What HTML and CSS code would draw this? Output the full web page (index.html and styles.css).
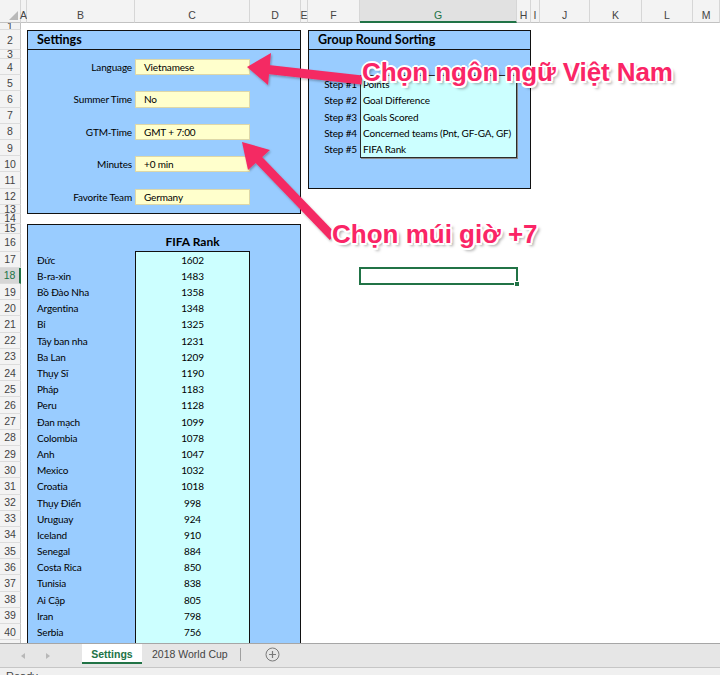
FILE: index.html
```html
<!DOCTYPE html>
<html lang="vi">
<head>
<meta charset="utf-8">
<title>Settings - 2018 World Cup</title>
<link rel="stylesheet" href="styles.css">
</head>
<body>
<div class="app">
  <div class="sheet">
    <div class="ch corner"><span class="tri"></span></div>
    <div class="ch">A</div>
    <div class="ch">B</div>
    <div class="ch">C</div>
    <div class="ch">D</div>
    <div class="ch">E</div>
    <div class="ch">F</div>
    <div class="ch sel">G</div>
    <div class="ch">H</div>
    <div class="ch">I</div>
    <div class="ch">J</div>
    <div class="ch">K</div>
    <div class="ch">L</div>
    <div class="ch">M</div>

    <div class="rh">1</div>
    <div class="rh">2</div>
    <div class="rh">3</div>
    <div class="rh">4</div>
    <div class="rh">5</div>
    <div class="rh">6</div>
    <div class="rh">7</div>
    <div class="rh">8</div>
    <div class="rh">9</div>
    <div class="rh">10</div>
    <div class="rh">11</div>
    <div class="rh">12</div>
    <div class="rh tiny">13</div>
    <div class="rh tiny">14</div>
    <div class="rh tiny">15</div>
    <div class="rh">16</div>
    <div class="rh">17</div>
    <div class="rh sel">18</div>
    <div class="rh">19</div>
    <div class="rh">20</div>
    <div class="rh">21</div>
    <div class="rh">22</div>
    <div class="rh">23</div>
    <div class="rh">24</div>
    <div class="rh">25</div>
    <div class="rh">26</div>
    <div class="rh">27</div>
    <div class="rh">28</div>
    <div class="rh">29</div>
    <div class="rh">30</div>
    <div class="rh">31</div>
    <div class="rh">32</div>
    <div class="rh">33</div>
    <div class="rh">34</div>
    <div class="rh">35</div>
    <div class="rh">36</div>
    <div class="rh">37</div>
    <div class="rh">38</div>
    <div class="rh">39</div>
    <div class="rh">40</div>
    <div class="rh">41</div>

    <section class="box settings">
      <div class="box-head">Settings</div>
      <div class="fields">
        <div class="field"><div class="lbl">Language</div><div class="val">Vietnamese</div></div>
        <div class="field"><div class="lbl">Summer Time</div><div class="val">No</div></div>
        <div class="field"><div class="lbl">GTM-Time</div><div class="val">GMT + 7:00</div></div>
        <div class="field"><div class="lbl">Minutes</div><div class="val">+0 min</div></div>
        <div class="field"><div class="lbl">Favorite Team</div><div class="val">Germany</div></div>
      </div>
    </section>

    <section class="box group">
      <div class="box-head">Group Round Sorting</div>
      <div class="steps">
        <div class="step-lbls">
          <div>Step #1</div>
          <div>Step #2</div>
          <div>Step #3</div>
          <div>Step #4</div>
          <div>Step #5</div>
        </div>
        <div class="step-list">
          <div>Points</div>
          <div>Goal Difference</div>
          <div>Goals Scored</div>
          <div>Concerned teams (Pnt, GF-GA, GF)</div>
          <div>FIFA Rank</div>
        </div>
      </div>
    </section>

    <section class="box fifa">
      <div class="fifa-gap"></div>
      <div class="fifa-head"><div class="t">FIFA Rank</div></div>
      <div class="fifa-body">
        <div class="names">
          <div>Đức</div>
          <div>B-ra-xin</div>
          <div>Bồ Đào Nha</div>
          <div>Argentina</div>
          <div>Bỉ</div>
          <div>Tây ban nha</div>
          <div>Ba Lan</div>
          <div>Thụy Sĩ</div>
          <div>Pháp</div>
          <div>Peru</div>
          <div>Đan mạch</div>
          <div>Colombia</div>
          <div>Anh</div>
          <div>Mexico</div>
          <div>Croatia</div>
          <div>Thụy Điển</div>
          <div>Uruguay</div>
          <div>Iceland</div>
          <div>Senegal</div>
          <div>Costa Rica</div>
          <div>Tunisia</div>
          <div>Ai Cập</div>
          <div>Iran</div>
          <div>Serbia</div>
          <div>&nbsp;</div>
        </div>
        <div class="ranks">
          <div>1602</div>
          <div>1483</div>
          <div>1358</div>
          <div>1348</div>
          <div>1325</div>
          <div>1231</div>
          <div>1209</div>
          <div>1190</div>
          <div>1183</div>
          <div>1128</div>
          <div>1099</div>
          <div>1078</div>
          <div>1047</div>
          <div>1032</div>
          <div>1018</div>
          <div>998</div>
          <div>924</div>
          <div>910</div>
          <div>884</div>
          <div>850</div>
          <div>838</div>
          <div>805</div>
          <div>798</div>
          <div>756</div>
          <div>&nbsp;</div>
        </div>
      </div>
    </section>

    <div class="selcell"><span class="handle"></span></div>
  </div>

  <div class="tabbar">
    <div class="nav"><span class="arr-l"></span><span class="arr-r"></span></div>
    <div class="tab active">Settings</div>
    <div class="tab other">2018 World Cup</div>
    <div class="sep"></div>
    <svg class="add" width="15" height="15" viewBox="0 0 15 15">
      <circle cx="7.5" cy="7.5" r="6.5" fill="none" stroke="#7a7a7a" stroke-width="1"/>
      <path d="M7.5 4v7M4 7.5h7" stroke="#7a7a7a" stroke-width="1.2"/>
    </svg>
  </div>
  <div class="status">Ready</div>

  <svg class="arrows" width="720" height="675" viewBox="0 0 720 675">
    <defs>
      <filter id="sh" x="-20%" y="-20%" width="140%" height="140%">
        <feDropShadow dx="1" dy="1.5" stdDeviation="1" flood-color="#000" flood-opacity="0.3"/>
      </filter>
    </defs>
    <g fill="#f42a64" stroke="none" filter="url(#sh)">
      <line x1="268" y1="69.5" x2="362" y2="80" stroke="#f42a64" stroke-width="9"/>
      <polygon points="247,67 271,53 268,85"/>
      <line x1="256" y1="157" x2="333" y2="237" stroke="#f42a64" stroke-width="9"/>
      <polygon points="242,142 270,150 248,170"/>
    </g>
  </svg>
  <div class="callout c1">Chọn ngôn ngữ Việt Nam</div>
  <div class="callout c2">Chọn múi giờ +7</div>
</div>
</body>
</html>
```

FILE: styles.css
```css
* { box-sizing: border-box; }

html, body {
  margin: 0;
  padding: 0;
}

body {
  width: 720px;
  height: 675px;
  overflow: hidden;
  background: #ffffff;
  font-family: "Liberation Sans", Arial, sans-serif;
}

.app {
  position: relative;
  width: 720px;
  height: 675px;
  overflow: hidden;
}

/* ---------- sheet grid ---------- */
.sheet {
  display: grid;
  grid-template-columns: 21px 6px 108px 115px 51px 7px 52px 157px 14px 9px 50px 52px 51px 1fr;
  grid-template-rows: 23px 7px 20px 9px repeat(9, 16.2px) 9px 10px 10px 18px repeat(25, 16.2px);
  height: 643px;
  overflow: hidden;
  background: #ffffff;
}

.ch {
  grid-row: 1 / 2;
  display: flex;
  justify-content: center;
  background: #f3f3f3;
  border-right: 1px solid #d6d6d6;
  border-bottom: 1px solid #c2c2c2;
  padding-top: 8px;
  font-size: 10.5px;
  line-height: 14px;
  color: #444444;
  white-space: nowrap;
}

.ch.sel {
  background: #e1e1e1;
  color: #217346;
  border-bottom: 2px solid #217346;
}

.corner {
  justify-content: flex-end;
  align-items: flex-end;
  padding: 0 2px 2px 0;
}

.tri {
  width: 0;
  height: 0;
  border-left: 9px solid transparent;
  border-bottom: 9px solid #b9b9b9;
}

.rh {
  grid-column: 1 / 2;
  display: flex;
  align-items: center;
  justify-content: center;
  overflow: hidden;
  background: #f3f3f3;
  border-right: 1px solid #c2c2c2;
  border-bottom: 1px solid #dcdcdc;
  font-size: 10.5px;
  line-height: 12px;
  color: #444444;
}

.rh.tiny {
  align-items: flex-start;
  line-height: 8px;
}

.rh.sel {
  background: #d6d6d6;
  color: #217346;
  border-right: 2px solid #217346;
}

/* ---------- boxes ---------- */
.box {
  background: #99ccff;
  border: 1px solid #111111;
  font-family: "Lato", "Liberation Sans", sans-serif;
  font-size: 10px;
  letter-spacing: -0.15px;
  color: #000000;
}

.box-head {
  height: 19px;
  border-bottom: 1px solid #111111;
  padding-left: 9px;
  font-weight: bold;
  font-size: 12.5px;
  letter-spacing: 0;
  line-height: 18px;
}

.settings {
  grid-column: 3 / 6;
  grid-row: 3 / 15;
}

.fields {
  display: flex;
  flex-direction: column;
  gap: 16.2px;
  padding-top: 9px;
}

.field {
  display: flex;
  height: 16.2px;
}

.field .lbl {
  width: 107px;
  padding-right: 3px;
  text-align: right;
  line-height: 16.2px;
  white-space: nowrap;
}

.field .val {
  width: 115px;
  background: #ffffcc;
  border: 1px solid #ddd7a8;
  padding-left: 8px;
  line-height: 14px;
  white-space: nowrap;
}

.group {
  grid-column: 7 / 10;
  grid-row: 3 / 13;
}

.steps {
  display: flex;
  padding-top: 25.2px;
}

.step-lbls {
  width: 51px;
  padding-top: 1px;
}

.step-lbls div {
  height: 16.2px;
  line-height: 16.2px;
  padding-right: 3px;
  text-align: right;
  white-space: nowrap;
}

.step-list {
  width: 157px;
  background: #ccffff;
  border: 1px solid #2b2b2b;
  box-shadow: 1px 1px 0 #8a8a8a;
}

.step-list div {
  height: 16.2px;
  line-height: 16.2px;
  padding-left: 2px;
  white-space: nowrap;
}

.fifa {
  grid-column: 3 / 6;
  grid-row: 16 / -1;
  border-bottom: none;
  display: flex;
  flex-direction: column;
}

.fifa-gap { height: 9px; }

.fifa-head {
  display: flex;
  height: 18px;
}

.fifa-head .t {
  margin-left: 107px;
  width: 115px;
  text-align: center;
  font-weight: bold;
  font-size: 12px;
  letter-spacing: 0;
  line-height: 18px;
}

.fifa-body {
  display: flex;
}

.names {
  width: 107px;
  padding-top: 1px;
}

.names div {
  height: 16.2px;
  line-height: 16.2px;
  padding-left: 9px;
  white-space: nowrap;
}

.ranks {
  width: 115px;
  background: #ccffff;
  border: 1px solid #111111;
  border-bottom: none;
}

.ranks div {
  height: 16.2px;
  line-height: 16.2px;
  text-align: center;
}

.selcell {
  grid-column: 8 / 9;
  grid-row: 19 / 20;
  margin: -1px;
  border: 2px solid #217346;
  position: relative;
}

.handle {
  position: absolute;
  right: -4px;
  bottom: -4px;
  width: 6px;
  height: 6px;
  background: #217346;
  border: 1px solid #ffffff;
}

/* ---------- tabs & status ---------- */
.tabbar {
  height: 24px;
  display: flex;
  align-items: flex-start;
  background: #e6e6e6;
  border-top: 1px solid #a6a6a6;
  font-size: 10.5px;
  color: #444444;
}

.nav {
  width: 82px;
  height: 23px;
  display: flex;
  align-items: center;
  gap: 21px;
  padding-left: 21px;
}

.arr-l {
  width: 0;
  height: 0;
  border-top: 3px solid transparent;
  border-bottom: 3px solid transparent;
  border-right: 4px solid #b8b8b8;
}

.arr-r {
  width: 0;
  height: 0;
  border-top: 3px solid transparent;
  border-bottom: 3px solid transparent;
  border-left: 4px solid #b8b8b8;
}

.tab {
  height: 20px;
  line-height: 20px;
  white-space: nowrap;
}

.tab.active {
  width: 60px;
  background: #ffffff;
  border-bottom: 2px solid #217346;
  color: #217346;
  font-weight: bold;
  text-align: center;
}

.tab.other {
  padding: 0 12px 0 10px;
}

.sep {
  width: 1px;
  height: 13px;
  margin-top: 4px;
  background: #a0a0a0;
}

.add {
  margin-left: 24px;
  margin-top: 3px;
}

.status {
  height: 8px;
  overflow: hidden;
  background: #f0f0f0;
  border-top: 1px solid #c6c6c6;
  padding: 1px 0 0 6px;
  font-size: 11px;
  line-height: 14px;
  color: #444444;
}

/* ---------- annotations ---------- */
.arrows {
  position: absolute;
  left: 0;
  top: 0;
  pointer-events: none;
}

.callout {
  position: absolute;
  font-family: "Liberation Sans", Arial, sans-serif;
  font-weight: bold;
  font-size: 26px;
  line-height: 26px;
  color: #fa2566;
  white-space: nowrap;
  text-shadow:
    -2px 0 0 #fff, 2px 0 0 #fff, 0 -2px 0 #fff, 0 2px 0 #fff,
    -1.5px -1.5px 0 #fff, 1.5px 1.5px 0 #fff, -1.5px 1.5px 0 #fff, 1.5px -1.5px 0 #fff,
    3px 3px 3px rgba(0, 0, 0, 0.35);
}

.c1 { left: 362px; top: 59px; letter-spacing: -0.1px; }
.c2 { left: 332px; top: 221px; }
```
